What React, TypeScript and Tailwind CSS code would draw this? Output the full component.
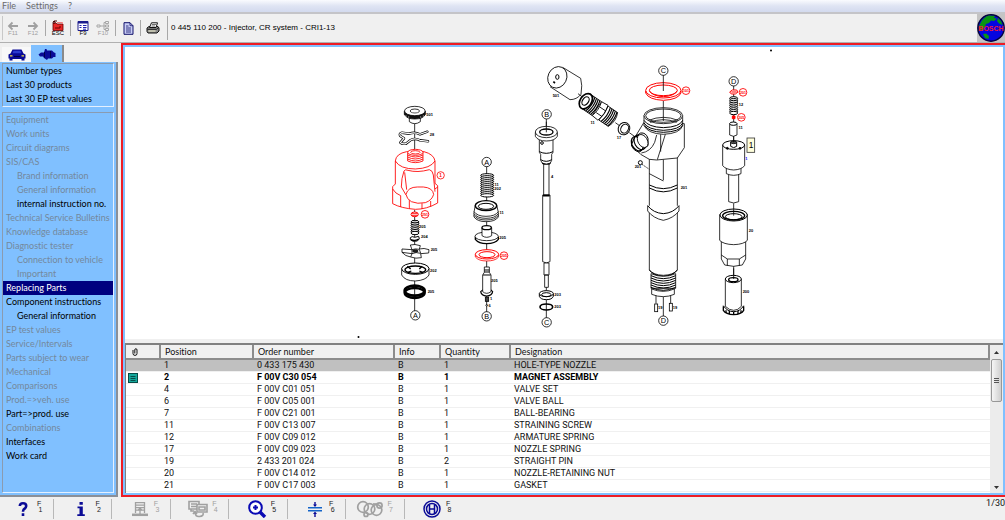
import React from 'react';
import clsx from 'clsx';

interface NavItem {
  label: string;
  enabled?: boolean;
  indent?: boolean;
  selected?: boolean;
}

const historyItems: NavItem[] = [
  { label: 'Number types', enabled: true },
  { label: 'Last 30 products', enabled: true },
  { label: 'Last 30 EP test values', enabled: true },
];

const navItems: NavItem[] = [
  { label: 'Equipment' },
  { label: 'Work units' },
  { label: 'Circuit diagrams' },
  { label: 'SIS/CAS' },
  { label: 'Brand information', indent: true },
  { label: 'General information', indent: true },
  { label: 'internal instruction no.', indent: true, enabled: true },
  { label: 'Technical Service Bulletins' },
  { label: 'Knowledge database' },
  { label: 'Diagnostic tester' },
  { label: 'Connection to vehicle', indent: true },
  { label: 'Important', indent: true },
  { label: 'Replacing Parts', enabled: true, selected: true },
  { label: 'Component instructions', enabled: true },
  { label: 'General information', indent: true, enabled: true },
  { label: 'EP test values' },
  { label: 'Service/Intervals' },
  { label: 'Parts subject to wear' },
  { label: 'Mechanical' },
  { label: 'Comparisons' },
  { label: 'Prod.=>veh. use' },
  { label: 'Part=>prod. use', enabled: true },
  { label: 'Combinations' },
  { label: 'Interfaces', enabled: true },
  { label: 'Work card', enabled: true },
];

const parts = [
  { position: '1', order: '0 433 175 430', info: 'B', quantity: 1, designation: 'HOLE-TYPE NOZZLE' },
  { position: '2', order: 'F 00V C30 054', info: 'B', quantity: 1, designation: 'MAGNET ASSEMBLY' },
  { position: '4', order: 'F 00V C01 051', info: 'B', quantity: 1, designation: 'VALVE SET' },
  { position: '6', order: 'F 00V C05 001', info: 'B', quantity: 1, designation: 'VALVE BALL' },
  { position: '7', order: 'F 00V C21 001', info: 'B', quantity: 1, designation: 'BALL-BEARING' },
  { position: '11', order: 'F 00V C13 007', info: 'B', quantity: 1, designation: 'STRAINING SCREW' },
  { position: '12', order: 'F 00V C09 012', info: 'B', quantity: 1, designation: 'ARMATURE SPRING' },
  { position: '17', order: 'F 00V C09 023', info: 'B', quantity: 1, designation: 'NOZZLE SPRING' },
  { position: '19', order: '2 433 201 024', info: 'B', quantity: 2, designation: 'STRAIGHT PIN' },
  { position: '20', order: 'F 00V C14 012', info: 'B', quantity: 1, designation: 'NOZZLE-RETAINING NUT' },
  { position: '21', order: 'F 00V C17 003', info: 'B', quantity: 1, designation: 'GASKET' },
];

function MenuBar() {
  return (
    <nav className="flex h-[14px] items-center gap-[10px] border-b-2 border-[#c4c4c8] bg-linear-to-b from-[#fafbfe] via-[#dfe4f3] to-[#d3daee] pl-[2px] text-[9px] leading-[12px] text-[#6b6b6b]">
      <button>File</button>
      <button>Settings</button>
      <button>?</button>
    </nav>
  );
}

function Separator() {
  return <div className="mx-[2px] h-[16px] w-px bg-[#a8a8a8]" />;
}

interface ToolButtonProps {
  label: string;
  caption?: string;
  disabled?: boolean;
  children: React.ReactNode;
}

function ToolButton({ label, caption, disabled, children }: ToolButtonProps) {
  return (
    <button
      aria-label={label}
      disabled={disabled}
      className={clsx('flex w-[20px] flex-col items-center', disabled ? 'text-[#a0a0a0]' : 'text-black')}
    >
      {children}
      {caption && <span className="font-['Liberation_Sans'] text-[6px] leading-[5px]">{caption}</span>}
    </button>
  );
}

function Toolbar() {
  return (
    <header className="flex h-[28px] items-center bg-[#f0f0f0] pl-[2px]">
      <div className="h-[24px] w-px bg-[#c8c8c8]" />
      <ToolButton label="Back" caption="F11" disabled>
        <svg className="h-[10px] w-[12px]" viewBox="0 0 12 10" fill="none" stroke="#a0a0a0" strokeWidth="1.8">
          <path d="M2 5H11M5.5 1.5L2 5L5.5 8.5" />
        </svg>
      </ToolButton>
      <ToolButton label="Forward" caption="F12" disabled>
        <svg className="h-[10px] w-[12px]" viewBox="0 0 12 10" fill="none" stroke="#a0a0a0" strokeWidth="1.8">
          <path d="M1 5H10M6.5 1.5L10 5L6.5 8.5" />
        </svg>
      </ToolButton>
      <Separator />
      <ToolButton label="Escape" caption="ESC">
        <svg className="h-[11px] w-[12px]" viewBox="0 0 12 11">
          <path d="M1 3H4L5 4H11V10.5H1Z" fill="#e82828" stroke="#600" strokeWidth=".8" />
          <path d="M2 4V1H5M3.5 2.5L2 1L.8 2.5" fill="none" stroke="#400" />
          <path d="M5 2.5H10.5V4" fill="none" stroke="#f08080" />
          <path d="M3 8H8V6" fill="none" stroke="#600" />
        </svg>
      </ToolButton>
      <Separator />
      <ToolButton label="Lists" caption="F9">
        <svg className="h-[10px] w-[12px]" viewBox="0 0 12 10">
          <path d="M1 .5H11V9.5H1Z" fill="#fff" stroke="#1c1c8c" />
          <path d="M1 1.5H11" stroke="#1c1c8c" strokeWidth="2" />
          <path d="M2.5 4.5H4.5M2.5 6.5H4.5M6 4.5H9.5M6 6.5H9.5M6 8.2H9" stroke="#2222b0" />
        </svg>
      </ToolButton>
      <ToolButton label="Tree" caption="F10" disabled>
        <svg className="h-[10px] w-[14px]" viewBox="0 0 14 10" fill="none" stroke="#a8a8a8">
          <path d="M1 4H4V6H1ZM4 5H8M8 1.5V8.5M8 1.5H9.5M8 5H9.5M8 8.5H9.5M9.5 .5H12.5V2.5H9.5ZM9.5 4H12.5V6H9.5ZM9.5 7.5H12.5V9.5H9.5Z" />
        </svg>
      </ToolButton>
      <Separator />
      <ToolButton label="Document">
        <svg className="h-[13px] w-[11px]" viewBox="0 0 11 13">
          <path d="M1 .7H7L10 3.7V12.3H1Z" fill="#c8cdf4" stroke="#10106a" />
          <path d="M7 .7V3.7H10M3 4H5.5M3 6H8M3 8H8M3 10H8" fill="none" stroke="#10106a" strokeWidth=".8" />
        </svg>
      </ToolButton>
      <Separator />
      <ToolButton label="Print">
        <svg className="h-[12px] w-[14px]" viewBox="0 0 14 12">
          <path d="M1 6L3 4.5H12L13 6V9L11 11H2L1 9.5Z" fill="#8a8a8a" stroke="#111" />
          <path d="M3.5 5.5L5.5 .8H11.5L10 5.5Z" fill="#fff" stroke="#111" />
          <path d="M6 2.5H10M5.5 4H9" stroke="#333" strokeWidth=".7" />
          <path d="M1.5 7.3H10.5L12.5 5.5" fill="none" stroke="#111" strokeWidth=".9" />
          <path d="M2.5 9H9.5" stroke="#f4f4d0" />
        </svg>
      </ToolButton>
      <div className="mr-[3px] ml-[4px] h-[24px] w-px bg-[#a8a8a8]" />
      <h1 className="font-['Liberation_Sans'] text-[8px] leading-[12px] text-black">
        0 445 110 200 - Injector, CR system - CRI1-13
      </h1>
      <svg className="ml-auto h-[28px] w-[28px] bg-[#c4c4c4]" viewBox="0 0 28 28" role="img" aria-label="BOSCH">
        <circle cx="14" cy="14" r="13.2" fill="#0505e0" stroke="#04043c" strokeWidth="1.4" />
        <path d="M3 10Q6 3 12 1.5L18 2L17 4L20 4.5L17 7L14 6.5L12 9L9 10L8 13L5 17L2.5 17Q1 13 3 10Z" fill="#0a9414" />
        <path d="M21 4L24 7L25.5 11L22 9.5L20 7ZM6 20L9 19.5L12 22L11.5 25L8 24Z" fill="#0a9414" />
        <text x="14" y="17" textAnchor="middle" className="font-['Liberation_Sans'] text-[7px] font-bold" fill="#f01838">
          BOSCH
        </text>
      </svg>
    </header>
  );
}

function NavGroup({ items, grow }: { items: NavItem[]; grow?: boolean }) {
  return (
    <ul
      className={clsx(
        'border border-t-[#8a9bb0] border-r-[#e4f0ff] border-b-[#e4f0ff] border-l-[#8a9bb0]',
        grow && 'flex-1',
      )}
    >
      {items.map((item, index) => (
        <li key={index}>
          <button
            disabled={!item.enabled}
            className={clsx(
              'block h-[14px] w-full text-left text-[9px] leading-[14px] whitespace-nowrap',
              item.indent ? 'pl-[14px]' : 'pl-[3px]',
              item.selected && 'bg-[#00007f] text-white',
              !item.selected && (item.enabled ? 'text-black' : 'text-[#74889c]'),
            )}
          >
            {item.label}
          </button>
        </li>
      ))}
    </ul>
  );
}

function Sidebar() {
  return (
    <aside className="flex w-[118px] shrink-0 flex-col pt-[2px]">
      <div className="flex items-end pl-[2px]">
        <button aria-label="Vehicle" className="flex h-[15px] w-[29px] items-center justify-center bg-[#f8f8f8]">
          <svg className="h-[12px] w-[18px]" viewBox="0 0 18 12">
            <path d="M4.5 .5H13.5L15.5 4.5L17.5 5.5V9.5H16.5V11.5H13.5V10H4.5V11.5H1.5V9.5H.5V5.5L2.5 4.5Z" fill="#0a0a96" />
            <path d="M5.5 1.8H12.5L13.5 4.2H4.5Z" fill="#2a3ad0" />
            <path d="M2 6.8H4.5M13.5 6.8H16" stroke="#f0e040" strokeWidth="1.2" />
            <path d="M6 7.5H12" stroke="#000040" />
          </svg>
        </button>
        <button
          aria-label="Component"
          className="flex h-[17px] w-[33px] items-center justify-center border-r-2 border-[#8a8a8a] bg-[#80c0ff]"
        >
          <svg className="h-[12px] w-[18px]" viewBox="0 0 18 12">
            <path d="M.5 6.5L3 4.5H6L7 1H8.5L9 2.5H14L16 4.5L17.5 5V9H15.5L14 10.5H10L9 12L6 10L5 8.5H2Z" fill="#0a0a96" />
            <path d="M6.5 4V9.5M12.5 3V10" stroke="#000050" />
          </svg>
        </button>
      </div>
      <div className="flex flex-1 flex-col gap-[5px] border-r-2 border-b-2 border-[#8a8f98] bg-[#80c0ff] px-[2px] pt-px pb-[2px]">
        <NavGroup items={historyItems} />
        <NavGroup items={navItems} grow />
      </div>
    </aside>
  );
}

interface MarkProps {
  x: number;
  y: number;
  text: string;
  color?: string;
}

// Ringed letter that ties two assembly axes together
function AxisMark({ x, y, text }: MarkProps) {
  return (
    <g>
      <circle cx={x} cy={y} r="14" fill="#fff" strokeWidth="2.4" />
      <text x={x} y={y + 8} textAnchor="middle" fill="#000" stroke="none" fontSize="22">
        {text}
      </text>
    </g>
  );
}

function RedMark({ x, y, text }: MarkProps) {
  return (
    <g>
      <circle cx={x} cy={y} r="11.5" fill="#fff" stroke="#f00" strokeWidth="2.6" />
      <text x={x} y={y + 4} textAnchor="middle" fill="#f00" stroke="none" fontSize="11" fontWeight="bold">
        {text}
      </text>
    </g>
  );
}

function PartNo({ x, y, text, color = '#000' }: MarkProps) {
  return (
    <text x={x} y={y + 4} textAnchor="middle" fill={color} stroke="none" fontSize="12" fontWeight="bold">
      {text}
    </text>
  );
}

function Spring({ x1, x2, y1, y2, step }: { x1: number; x2: number; y1: number; y2: number; step: number }) {
  const coils: React.ReactNode[] = [];
  for (let y = y1; y <= y2; y += step) {
    coils.push(
      <ellipse key={y} cx={(x1 + x2) / 2} cy={y} rx={(x2 - x1) / 2} ry="5" fill="#fff" strokeWidth="3" />,
    );
  }
  return <g>{coils}</g>;
}

function SolenoidColumn() {
  return (
    <g transform="translate(380 95) scale(0.33333)">
      <path d="M104 84V172M104 345V650M320 212V655" />

      <path d="M88 66V80Q104 92 121 80V66" fill="#fff" />
      <path d="M73 48V58Q80 72 104 72Q130 72 136 58V48" fill="#111" />
      <ellipse cx="104.5" cy="48" rx="31" ry="14" fill="#fff" />
      <ellipse cx="104.5" cy="48" rx="14" ry="6" />
      <path d="M94 52Q104 56 115 52M78 60V66M86 63V69M122 63V69M130 60V66" stroke="#ddd" strokeWidth="1.5" />
      <PartNo x={149} y={58} text="501" />

      {/* spring clip, drawn as a tube: dark outline with a white core */}
      <g strokeLinecap="round" strokeLinejoin="round">
        <path d="M142 110L120 118Q104 110 88 116L66 113Q56 116 61 123L72 130L61 143Q66 148 78 146L92 135Q106 128 120 136L144 139" strokeWidth="7.5" />
        <path d="M142 110L120 118Q104 110 88 116L66 113Q56 116 61 123L72 130L61 143Q66 148 78 146L92 135Q106 128 120 136L144 139" stroke="#fff" strokeWidth="3.4" />
      </g>
      <PartNo x={156} y={120} text="28" />

      <g stroke="#f00" strokeWidth="2.6">
        <path d="M38 275L46 267V198Q48 176 80 170H132Q162 178 165 198V265L173 272V324Q140 343 106 343Q64 340 38 326Z" fill="#fff" />
        <path d="M46 198Q60 222 106 222Q152 220 165 198M38 282Q46 296 62 302M165 282L173 276M62 302V336M88 306V341M126 324V342M152 318V335" />
        <path d="M83 172V198Q106 208 129 198V172" fill="#fff" />
        <ellipse cx="106" cy="172" rx="23" ry="9" fill="#fff" />
        <ellipse cx="106" cy="172" rx="14" ry="5" />
        <path d="M83 180Q106 192 129 180M83 186Q106 198 129 186M83 192Q106 204 129 192" />
        <path d="M72 228Q76 222 84 226Q112 234 148 224Q158 226 160 240L165 290M72 228Q64 250 64 276L78 300" />
        <path d="M74 232L80 284" />
        <path d="M78 298Q84 276 112 276H130Q158 278 161 298Q156 316 136 323Q112 328 94 320Q80 312 78 298Z" fill="#fff" />
        <ellipse cx="104" cy="358" rx="11" ry="7" fill="#fff" strokeWidth="3" />
        <path d="M96 356H113M96 361H113" />
      </g>
      <circle cx="182" cy="241" r="11" fill="#fff" stroke="#f00" />
      <text x="182" y="246" textAnchor="middle" fill="#f00" stroke="none" fontSize="14" fontWeight="bold">
        1
      </text>
      <RedMark x={135} y={358} text="291" />

      <Spring x1={93} x2={117} y1={381} y2={414} step={5.5} />
      <PartNo x={127} y={394} text="205" />
      <path d="M91 428Q96 422 104 427L116 424Q122 432 112 438Q98 442 91 434Z" fill="#fff" strokeWidth="3" />
      <path d="M93 434Q104 440 116 432" strokeWidth="4" />
      <PartNo x={133} y={426} text="204" />
      <path d="M91 450Q104 446 121 452L118 462Q132 458 147 464L146 474L122 476L124 488Q108 492 92 486L96 476L66 472V462L96 464Z" fill="#fff" />
      <path d="M96 464Q106 460 118 463L122 475Q108 470 96 476ZM66 472Q76 484 92 486" />
      <ellipse cx="106" cy="468" rx="8" ry="4" fill="#222" />
      <PartNo x={162} y={464} text="205" />
      <path d="M65 520V540Q75 558 106 558Q138 556 147 540V520" fill="#fff" />
      <ellipse cx="106" cy="521" rx="41" ry="17" fill="#fff" strokeWidth="3" />
      <ellipse cx="106" cy="524" rx="31" ry="11" strokeWidth="4" />
      <path d="M82 514L92 522M126 514L118 522M84 532L94 528M128 532L118 528" strokeWidth="4" />
      <PartNo x={160} y={528} text="202" />
      <ellipse cx="104" cy="587" rx="30" ry="15" strokeWidth="8" />
      <ellipse cx="104" cy="594" rx="30" ry="15" strokeWidth="7" />
      <PartNo x={153} y={589} text="205" />
      <AxisMark x={106} y={661} text="A" />

      <AxisMark x={320} y={201} text="A" />
      <Spring x1={302} x2={341} y1={241} y2={301} step={6} />
      <PartNo x={350} y={268} text="11" />
      <PartNo x={353} y={281} text="202" />
      <path d="M286 330L282 352V366Q292 380 318 380Q346 380 355 366V352L350 330" fill="#fff" />
      <path d="M282 350Q292 364 318 364Q346 364 355 350M282 356Q292 370 318 370Q346 370 355 356M282 361Q292 375 318 375Q346 375 355 361" />
      <ellipse cx="318" cy="332" rx="32" ry="15" fill="#fff" strokeWidth="4" />
      <ellipse cx="318" cy="334" rx="23" ry="9" strokeWidth="3" />
      <PartNo x={365} y={354} text="11" />
      <path d="M286 425V433Q296 446 320 446Q346 445 355 433V425" fill="#fff" strokeWidth="4" />
      <ellipse cx="320" cy="424" rx="35" ry="13" fill="#fff" />
      <path d="M306 398V422Q320 432 335 422V398" fill="#fff" />
      <ellipse cx="320" cy="398" rx="14" ry="6" fill="#fff" strokeWidth="4" />
      <PartNo x={368} y={428} text="205" />
      <g stroke="#f00">
        <path d="M286 478V486Q296 498 320 498Q346 498 356 486V478" fill="#fff" />
        <ellipse cx="321" cy="478" rx="35" ry="14" fill="#fff" strokeWidth="3" />
        <ellipse cx="321" cy="479" rx="24" ry="9" strokeWidth="3" />
      </g>
      <RedMark x={372} y={482} text="205" />
      <path d="M302 590Q304 602 320 603Q336 602 338 590L333 585H308Z" fill="#fff" strokeWidth="3.5" />
      <path d="M313 516H328V532L333 540V590Q320 600 308 590V540L313 532Z" fill="#fff" />
      <path d="M313 525H328M309 540H332M313 531H328" strokeWidth="3" />
      <PartNo x={343} y={556} text="205" />
      <rect x="316" y="606" width="10" height="13" fill="#444" />
      <PartNo x={333} y={612} text="1" />
      <circle cx="320" cy="631" r="2.5" fill="#fff" />
      <PartNo x={329} y={632} text="6" />
      <AxisMark x={320} y={664} text="B" />
    </g>
  );
}

function ValveColumn() {
  return (
    <g transform="translate(520 55) scale(0.33333)">
      <path d="M128 37L182 70Q188 90 183 118Q170 134 150 134L90 95" fill="#fff" />
      <ellipse cx="112" cy="67" rx="28" ry="33" transform="rotate(25 112 67)" fill="#fff" />
      <ellipse cx="112" cy="66" rx="5" ry="7" strokeWidth="3" />
      <path d="M100 80L105 84" strokeWidth="5" />
      <PartNo x={108} y={123} text="501" />
      <path d="M174 116L190 128M286 203L300 213M328 233L346 246" />

      <g transform="rotate(34 237 164)">
        <path d="M188 140H230V190H188Z" fill="#fff" />
        <path d="M200 140Q208 165 200 190M206 140Q214 165 206 190M212 140Q220 165 212 190M218 140Q226 165 218 190M224 140Q232 165 224 190" strokeWidth="3.5" />
        <path d="M230 140L252 138Q260 165 252 192L230 190Q238 165 230 140ZM235 156H256M235 176H256" fill="#fff" />
        <path d="M254 140H288Q300 164 288 190H254Q260 165 254 140Z" fill="#fff" />
        <path d="M262 140Q270 165 262 190M268 140Q276 165 268 190M274 140Q282 165 274 190M280 140Q288 165 280 190M286 140Q294 165 286 190" strokeWidth="3.5" />
        <ellipse cx="190" cy="165" rx="17" ry="25" fill="#fff" strokeWidth="5" />
        <ellipse cx="189" cy="165" rx="9" ry="14" strokeWidth="3.5" />
      </g>
      <PartNo x={218} y={202} text="11" />
      <ellipse cx="312" cy="221" rx="17" ry="19" transform="rotate(30 312 221)" fill="#fff" strokeWidth="3" />
      <ellipse cx="314" cy="221" rx="11" ry="14" transform="rotate(30 314 221)" strokeWidth="3" />
      <PartNo x={297} y={248} text="17" />

      <path d="M79 190V232M79 696V790" />
      <AxisMark x={80} y={178} text="B" />
      <path d="M58 250V292L62 298V316L69 328H89L95 316V298L99 292V250" fill="#fff" />
      <path d="M58 290Q79 300 99 290M62 314Q79 324 95 314M66 324Q79 332 92 324" strokeWidth="3" />
      <circle cx="66" cy="264" r="4" strokeWidth="3" />
      <path d="M46 232V244Q54 258 79 258Q104 258 112 244V232" fill="#fff" />
      <ellipse cx="79" cy="231" rx="33" ry="17" fill="#fff" />
      <ellipse cx="79" cy="231" rx="20" ry="9" strokeWidth="4" />
      <path d="M79 200V232" />
      <path d="M71 328H87V420H71Z" fill="#fff" />
      <path d="M68 420H90V620Q79 628 68 620Z" fill="#fff" />
      <path d="M69 422H89" strokeWidth="5" />
      <path d="M72 624H87V660H72ZM74 660H85V697H74Z" fill="#fff" />
      <PartNo x={96} y={366} text="4" />
      <path d="M58 716V724Q62 734 79 734Q96 734 100 724V716" fill="#fff" strokeWidth="3" />
      <ellipse cx="79" cy="716" rx="21" ry="9" fill="#fff" strokeWidth="3" />
      <ellipse cx="79" cy="719" rx="14" ry="6" strokeWidth="3" />
      <PartNo x={113} y={720} text="203" />
      <ellipse cx="79" cy="756" rx="19" ry="9" strokeWidth="5" />
      <PartNo x={113} y={756} text="203" />
      <AxisMark x={80} y={802} text="C" />
    </g>
  );
}

function HousingColumn() {
  return (
    <g transform="translate(620 55) scale(0.33333)">
      <g stroke="#f00" strokeWidth="3">
        <ellipse cx="130" cy="106" rx="53" ry="23" fill="#fff" />
        <path d="M77 108V114Q86 134 130 136Q174 134 183 114V108" />
        <ellipse cx="130" cy="106" rx="42" ry="16" />
        <path d="M88 108Q100 124 130 125Q160 124 172 108" />
      </g>
      <path d="M130 60V108M130 138V190" />
      <AxisMark x={130} y={47} text="C" />
      <RedMark x={198} y={107} text="101" />

      <path d="M88 300V645Q100 660 130 661Q160 660 172 645V300Z" fill="#fff" />
      <path d="M72 202L44 248V280L62 298L88 313L110 315L172 309L193 278V206Z" fill="#fff" />
      <path d="M72 182V212Q84 236 130 238Q180 236 188 212V182" fill="#fff" />
      <path d="M72 196Q84 216 130 218Q180 216 188 196M72 204Q84 224 130 226Q180 224 188 204M74 211Q84 230 130 232Q180 230 188 211" strokeWidth="3" />
      <ellipse cx="130" cy="182" rx="58" ry="24" fill="#fff" />
      <ellipse cx="130" cy="182" rx="53" ry="20" />
      <path d="M86 196Q130 178 174 196M90 202Q130 186 170 202M130 160V198" />
      <path d="M122 238V290M136 238L112 314M64 294Q92 290 104 262L110 240M130 314V376M88 356L130 378" />
      <path d="M44 246L62 234Q78 232 84 250V272L58 291Q40 288 34 270Z" fill="#fff" strokeWidth="3" />
      <ellipse cx="52" cy="266" rx="16" ry="23" transform="rotate(-30 52 266)" strokeWidth="4" />
      <ellipse cx="60" cy="262" rx="16" ry="23" transform="rotate(-30 60 262)" strokeWidth="3.5" />
      <ellipse cx="68" cy="258" rx="14" ry="21" transform="rotate(-30 68 258)" fill="#fff" />
      <circle cx="61" cy="323" r="6" fill="#fff" strokeWidth="3" />
      <path d="M66 328L88 343" strokeDasharray="5 3" />
      <PartNo x={54} y={335} text="201" />
      <path d="M88 390Q130 412 172 390M88 399Q130 422 172 399" strokeWidth="3" />
      <PartNo x={192} y={399} text="201" />

      <path d="M83 452V468Q100 490 130 496Q160 490 177 468V452" fill="#fff" />
      <path d="M83 452Q100 474 130 476Q160 474 177 452" strokeWidth="3" />
      <path d="M88 645Q100 662 130 664Q160 662 172 645" strokeWidth="3" />
      <path d="M93 656V700H167V656Q130 672 93 656Z" fill="#fff" />
      <path d="M93 662Q130 680 167 662M93 669Q130 687 167 669M93 676Q130 694 167 676M93 683Q130 701 167 683M93 690Q130 708 167 690M93 697Q130 715 167 697" strokeWidth="3" />
      <path d="M95 702V718Q130 732 163 718V702Q130 716 95 702Z" fill="#fff" />
      <path d="M108 722V746M152 722V746M130 726V786" />
      <rect x="104" y="747" width="9" height="23" fill="#fff" />
      <rect x="148" y="745" width="9" height="23" fill="#fff" />
      <PartNo x={121} y={757} text="19" />
      <PartNo x={165} y={757} text="19" />
      <AxisMark x={130} y={797} text="D" />
    </g>
  );
}

function NozzleColumn() {
  return (
    <g transform="translate(620 55) scale(0.33333)">
      <path d="M341 92V262M341 518V560M341 630V670" />
      <AxisMark x={341} y={79} text="D" />
      <g stroke="#f00" strokeWidth="3">
        <path d="M329 111L337 105H350L354 111L346 117H334ZM334 111H350" fill="#fff" />
        <path d="M337 183H345V191H337Z" fill="#f00" />
      </g>
      <RedMark x={369} y={112} text="201" />
      <Spring x1={329} x2={353} y1={130} y2={174} step={5.5} />
      <PartNo x={363} y={149} text="12" />
      <RedMark x={364} y={187} text="205" />
      <path d="M329 206V240Q340 248 351 240V206" fill="#fff" />
      <ellipse cx="340" cy="206" rx="11" ry="5" fill="#fff" strokeWidth="3" />
      <PartNo x={362} y={219} text="11" />

      <path d="M326 358V440Q341 448 356 440V358" fill="#fff" />
      <path d="M319 336V356Q341 366 363 356V336" fill="#fff" />
      <path d="M308 270V332Q318 344 341 345Q364 344 374 332V270" fill="#fff" />
      <ellipse cx="341" cy="270" rx="33" ry="13" fill="#fff" strokeWidth="3" />
      <path d="M332 262V274Q341 282 350 274V262Z" fill="#fff" strokeWidth="3" />
      <ellipse cx="341" cy="262" rx="9" ry="4" fill="#555" />
      <circle cx="322" cy="280" r="3" fill="#000" />
      <circle cx="360" cy="280" r="3" fill="#000" />
      <path d="M341 244V262" />
      <PartNo x={379} y={310} text="1" color="#00f" />
      <rect x="381" y="249" width="23" height="43" fill="#ffffdc" stroke="#333" />
      <text x="393" y="279" textAnchor="middle" fill="#000" stroke="none" fontSize="25">
        1
      </text>

      <path d="M304 556V612L314 630Q341 638 367 630L377 612V556" fill="#fff" />
      <path d="M304 600L322 612V632M322 612H358V632M358 612L377 600" />
      <path d="M299 478V556Q310 568 341 569Q372 568 382 556V478" fill="#fff" />
      <ellipse cx="341" cy="480" rx="41" ry="18" fill="#fff" strokeWidth="3" />
      <ellipse cx="341" cy="482" rx="33" ry="13" strokeWidth="4" />
      <ellipse cx="341" cy="485" rx="25" ry="9" strokeWidth="3" />
      <path d="M341 445V482" />
      <PartNo x={393} y={528} text="20" />

      <path d="M310 754V766Q318 778 341 779Q364 778 371 766V754" fill="#fff" strokeWidth="4" />
      <path d="M318 766V774M328 768V777M341 770V779M354 768V777M363 766V774" strokeWidth="4" />
      <path d="M316 672V754Q328 766 341 766Q354 766 364 754V672" fill="#fff" />
      <path d="M310 752Q322 770 341 770Q360 770 371 752" strokeWidth="3" />
      <ellipse cx="340" cy="672" rx="24" ry="11" fill="#fff" strokeWidth="3" />
      <ellipse cx="340" cy="674" rx="14" ry="6" strokeWidth="4" />
      <path d="M341 640V672" />
      <PartNo x={378} y={709} text="200" />
    </g>
  );
}

function ExplodedView() {
  return (
    <svg
      className="h-[292px] w-full bg-white font-['Liberation_Sans']"
      viewBox="125 47 878 292"
      preserveAspectRatio="xMinYMin meet"
      fill="none"
      stroke="#000"
      strokeWidth="2.4"
      role="img"
      aria-label="Injector exploded view"
    >
      <SolenoidColumn />
      <ValveColumn />
      <HousingColumn />
      <NozzleColumn />
      <circle cx="771" cy="50.5" r="1" fill="#000" stroke="none" />
      <circle cx="358.5" cy="337" r="1" fill="#000" stroke="none" />
    </svg>
  );
}

const headCell = 'border-r-2 border-b-2 border-[#8c8c8c] pl-[4px] font-normal';

function PartsTable() {
  return (
    <div className="flex flex-1 border-t-2 border-l border-[#808080] bg-white">
      <div className="flex-1">
        <table className="w-full table-fixed border-separate border-spacing-0 text-left text-[9px] leading-[11px] text-[#111]">
          <thead className="bg-[#f0f0f0]">
            <tr className="h-[15px]">
              <th className={clsx(headCell, 'w-[35px]')}>
                <svg className="ml-[2px] h-[8px] w-[6px]" viewBox="0 0 6 8" fill="none" stroke="#111" aria-label="Attachment">
                  <path d="M1 2V5.5Q1 7.4 3 7.4Q5 7.4 5 5.5V2Q5 .7 3.8 .7Q2.8 .7 2.8 2V5.5" />
                </svg>
              </th>
              <th className={clsx(headCell, 'w-[93px]')}>Position</th>
              <th className={clsx(headCell, 'w-[141px]')}>Order number</th>
              <th className={clsx(headCell, 'w-[46px]')}>Info</th>
              <th className={clsx(headCell, 'w-[70px]')}>Quantity</th>
              <th className={headCell}>Designation</th>
            </tr>
          </thead>
          <tbody className="font-['Roboto','Open_Sans',sans-serif]">
            {parts.map((part, index) => (
              <tr
                key={part.position}
                className={clsx(
                  'h-[12px] *:border-b *:border-[#f0f0f0] *:pl-[3px]',
                  index === 0 && 'bg-[#c0c0c0]',
                  index === 1 && 'font-bold text-black',
                )}
              >
                <td>
                  {index === 1 && (
                    <svg className="-ml-[1px] block h-[10px] w-[10px]" viewBox="0 0 10 10" aria-label="Details">
                      <rect x=".5" y=".5" width="9" height="9" fill="#14a89c" stroke="#064c48" />
                      <path d="M2.5 3.5H7.5M2.5 5.5H7.5M2.5 7.5H7.5" stroke="#064c48" />
                    </svg>
                  )}
                </td>
                <td>{part.position}</td>
                <td>{part.order}</td>
                <td>{part.info}</td>
                <td>{part.quantity}</td>
                <td>{part.designation}</td>
              </tr>
            ))}
          </tbody>
        </table>
      </div>
      <div className="flex w-[13px] flex-col items-center bg-[#ececec]">
        <button aria-label="Scroll up" className="flex h-[14px] w-full items-center justify-center">
          <svg className="h-[3px] w-[5px]" viewBox="0 0 5 3">
            <path d="M0 3L2.5 0L5 3Z" fill="#333" />
          </svg>
        </button>
        <div className="flex h-[43px] w-[11px] flex-col items-center justify-center gap-px rounded-[2px] border border-[#989898] bg-linear-to-r from-[#f6f6f6] to-[#cfcfcf]">
          <div className="h-px w-[5px] bg-[#555]" />
          <div className="h-px w-[5px] bg-[#555]" />
          <div className="h-px w-[5px] bg-[#555]" />
        </div>
        <button aria-label="Scroll down" className="mt-auto flex h-[12px] w-full items-center justify-center">
          <svg className="h-[3px] w-[5px]" viewBox="0 0 5 3">
            <path d="M0 0L2.5 3L5 0Z" fill="#333" />
          </svg>
        </button>
      </div>
    </div>
  );
}

interface FunctionKeyProps {
  label: string;
  number: number;
  disabled?: boolean;
  last?: boolean;
  children: React.ReactNode;
}

function FunctionKey({ label, number, disabled, last, children }: FunctionKeyProps) {
  return (
    <button
      aria-label={label}
      disabled={disabled}
      className={clsx(
        'flex h-[20px] flex-1 items-center justify-end gap-[4px] border-r pr-[9px]',
        last ? 'border-transparent' : 'border-[#b8b8b8]',
        disabled ? 'text-[#a0a0a0]' : 'text-[#222]',
      )}
    >
      {children}
      <span className="flex w-[7px] flex-col pb-[3px] font-['Liberation_Sans'] text-[7px] leading-[6px]">
        <span className="text-left">F</span>
        <span className="text-center">{number}</span>
      </span>
    </button>
  );
}

function StatusBar() {
  return (
    <footer className="flex h-[23px] items-center bg-[#f0f0f0]">
      <div className="flex w-[54px]">
        <FunctionKey label="Help" number={1}>
          <svg className="h-[16px] w-[20px]" viewBox="0 0 20 16" fill="none" stroke="#0a0a96" strokeWidth="2.6">
            <path d="M6.8 5Q7 2.3 10 2.3Q13.2 2.3 13.2 5Q13.2 6.6 11.4 7.8Q10 8.8 10 10.8M10 12.3V15" />
          </svg>
        </FunctionKey>
      </div>
      <div className="flex w-[409px]">
        <FunctionKey label="Information" number={2}>
          <svg className="h-[16px] w-[20px]" viewBox="0 0 20 16" fill="#0a0a96">
            <path d="M8.5 1H11.8V3.8H8.5ZM6.5 5.5H11.8V13.2H13.8V15H6.3V13.2H8.5V7.2H6.5Z" />
          </svg>
        </FunctionKey>
        <FunctionKey label="Load" number={3} disabled>
          <svg className="h-[16px] w-[20px]" viewBox="0 0 20 16" fill="none" stroke="#a0a0a0" strokeWidth="1.3">
            <path d="M5.5 12V1.7H14.5V12M5.5 4.2H14.5M5.5 6.7H14.5M5.5 9.2H14.5M10 15V8M8 9.5L10 7L12 9.5" />
            <path d="M2 13.8H18" strokeWidth="2.5" />
          </svg>
        </FunctionKey>
        <FunctionKey label="Transfer" number={4} disabled>
          <svg className="h-[18px] w-[20px]" viewBox="0 0 20 18" fill="none" stroke="#a0a0a0" strokeWidth="1.6">
            <path d="M1 1.5H11V9H1ZM3 4H9M3 6.5H9" />
            <path d="M9 4.5H19V12H9Z" fill="#f0f0f0" />
            <path d="M11 7H17V10H11ZM3 9V11H6M7 12Q7 17 11.5 16.5Q16 16 15 13M5 14L7 11.5L9 14" />
          </svg>
        </FunctionKey>
        <FunctionKey label="Zoom in" number={5}>
          <svg className="h-[18px] w-[20px]" viewBox="0 0 20 18" fill="none" stroke="#0a0ab4">
            <circle cx="8.5" cy="7.5" r="6.3" fill="#fff" strokeWidth="2" />
            <path d="M13 12L18 17" strokeWidth="3.4" />
            <path d="M8.5 5V10M6 7.5H11" strokeWidth="2" />
          </svg>
        </FunctionKey>
        <FunctionKey label="Split view" number={6}>
          <svg className="h-[16px] w-[20px]" viewBox="0 0 20 16" fill="none" stroke="#0a0a96" strokeWidth="1.4">
            <path d="M3 6.8H17M3 9.8H17" stroke="#1464c8" strokeWidth="1.5" />
            <path d="M10 1V5M10 12V16" />
            <path d="M8 3.5L10 6L12 3.5ZM8 13L10 10.6L12 13Z" fill="#0a0a96" stroke="none" />
          </svg>
        </FunctionKey>
        <FunctionKey label="Relations" number={7} disabled>
          <svg className="h-[18px] w-[28px]" viewBox="0 0 28 18" fill="none" stroke="#a0a0a0" strokeWidth="1.7">
            <circle cx="7" cy="7" r="5.3" />
            <circle cx="13.5" cy="9" r="5.3" />
            <circle cx="20.5" cy="10" r="5.3" />
            <circle cx="10" cy="14.5" r="2" />
            <circle cx="23.5" cy="5.5" r="2.6" />
            <path d="M17 4H21" />
          </svg>
        </FunctionKey>
        <FunctionKey label="Vehicle data" number={8} last>
          <svg className="h-[18px] w-[20px]" viewBox="0 0 20 18" fill="none" stroke="#0a0a96" strokeWidth="1.5">
            <circle cx="10" cy="9" r="8" />
            <circle cx="10" cy="9" r="5.5" />
            <path d="M7.5 4.5V13.5M12.5 4.5V13.5M7.5 9H12.5" />
          </svg>
        </FunctionKey>
      </div>
      <span className="ml-auto self-start font-['Roboto','Open_Sans',sans-serif] text-[9px] leading-[12px] text-[#111]">
        1/30
      </span>
    </footer>
  );
}

export default function App() {
  return (
    <div className="flex min-h-screen flex-col bg-[#f0f0f0] font-['Lato','Open_Sans',sans-serif] [font-variant-ligatures:none]">
      <MenuBar />
      <Toolbar />
      <div className="flex flex-1 border-t border-[#b0b0b0]">
        <Sidebar />
        <main className="ml-[3px] flex min-w-0 flex-1 flex-col border-2 border-r-0 border-[#ee1c24]">
          <div className="flex flex-1 flex-col border-2 border-[#80c0ff] bg-[#f0f0f0]">
            <ExplodedView />
            <div className="h-[4px] bg-[#f0f0f0]" />
            <PartsTable />
          </div>
        </main>
      </div>
      <StatusBar />
    </div>
  );
}
